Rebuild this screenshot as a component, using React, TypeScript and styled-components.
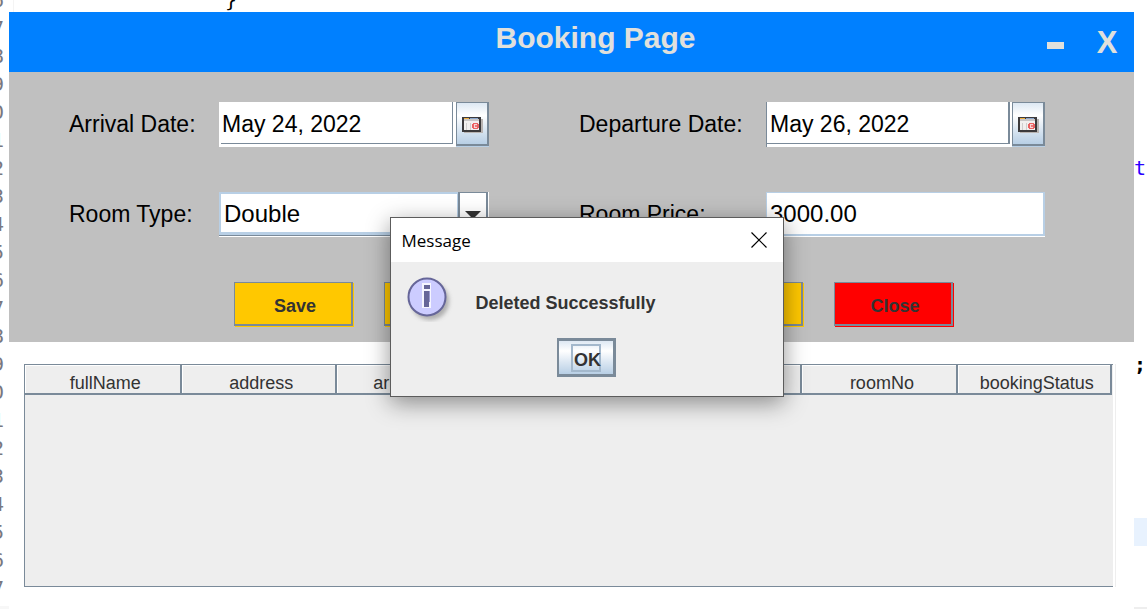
import React from "react";
import styled, { createGlobalStyle, css } from "styled-components";

const steel = "#7a8a99";
const sky = "#b8cfe5";
const sans = '"Liberation Sans", Arial, sans-serif';
const mono = '"DejaVu Sans Mono", monospace';
const metal = "linear-gradient(#dde8f3 0%, #ffffff 30%, #dde8f3 62%, #b8cfe5 100%)";

const GlobalStyle = createGlobalStyle`
  *, *::before, *::after { box-sizing: border-box; }
  body { margin: 0; background: #fff; font-family: ${sans}; }
  button, input, select { font-family: inherit; margin: 0; border-radius: 0; }
`;

const Desktop = styled.div`
  position: relative;
  display: grid;
  grid-template-columns: 9px minmax(0, 1fr) 13px;
  min-height: 100vh;
  overflow: hidden;
`;

const EditorStrip = styled.div<{ $edge: string; $rule: number }>`
  overflow: hidden;
  border-bottom: ${(p) => p.$rule}px solid ${(p) => p.$edge};
  font-family: ${mono};
  font-size: 20px;
`;

const CodeLines = styled.div`
  display: flex;
  flex-direction: column;
  margin-top: -14px;
`;

const LineNumber = styled.span`
  display: flex;
  justify-content: flex-end;
  height: 28px;
  padding-right: 5px;
  line-height: 28px;
  color: #787880;
`;

const CodeLine = styled.span<{ $active?: boolean; $color?: string; $bold?: boolean }>`
  height: 28px;
  line-height: 28px;
  color: ${(p) => p.$color ?? "#000"};
  font-weight: ${(p) => (p.$bold ? 700 : 400)};
  background: ${(p) => (p.$active ? "#e8f2fe" : "transparent")};
`;

const Center = styled.div`
  display: flex;
  flex-direction: column;
  min-width: 0;
`;

const EditorTop = styled.div`
  height: 12px;
  margin-left: 4px;
  padding-left: 211px;
  overflow: hidden;
  border-left: 1px solid #f4f4f4;
  font-family: ${mono};
  font-size: 20px;
`;

const BookingWindow = styled.main`
  flex: 1;
  background: #fff;
`;

const TitleBar = styled.header`
  display: flex;
  height: 60px;
  background: #0080ff;
  color: #e0e0dc;
`;

const Title = styled.h1`
  flex: 1;
  margin: 0;
  padding-left: 148px;
  text-align: center;
  font-size: 30px;
  line-height: 52px;
  font-weight: 700;
`;

const WindowControls = styled.div`
  display: flex;
  align-items: center;
  justify-content: flex-end;
  gap: 22px;
  width: 100px;
  padding-right: 12px;
`;

const WindowButton = styled.button`
  display: grid;
  place-items: center;
  width: 30px;
  height: 60px;
  padding: 2px 0 0;
  border: 0;
  background: transparent;
  color: inherit;
  font-size: 31px;
  font-weight: 700;
`;

const MinimizeMark = styled.span`
  width: 17px;
  height: 7px;
  margin-top: 4px;
  background: #e0e0dc;
`;

const Panel = styled.form`
  padding: 30px 89px 15px 60px;
  background: #c0c0c0;
`;

const Fields = styled.div`
  display: grid;
  grid-template-columns: 150px minmax(0, 270fr) 277px minmax(0, 279fr);
  row-gap: 45px;
`;

const Label = styled.label<{ $second?: boolean }>`
  padding-left: ${(p) => (p.$second ? 90 : 0)}px;
  font-size: 23px;
  line-height: 45px;
  color: #000;
  white-space: nowrap;
`;

const DateField = styled.div`
  display: flex;
  height: 45px;
`;

const DateFrame = styled.div<{ $framed?: boolean }>`
  flex: 1;
  min-width: 0;
  padding: 0 ${(p) => (p.$framed ? 2 : 3)}px 3px ${(p) => (p.$framed ? 0 : 2)}px;
  background: #fff;
  border-left: ${(p) => (p.$framed ? `1px solid ${steel}` : "0")};
`;

const DateInput = styled.input<{ $framed?: boolean }>`
  display: block;
  width: 100%;
  height: 42px;
  padding: 4px 0 0 ${(p) => (p.$framed ? 3 : 1)}px;
  border: solid ${steel};
  border-width: 0 ${(p) => (p.$framed ? 2 : 1)}px 1px 0;
  outline: 0;
  background: #fff;
  color: #000;
  font-size: 23px;
`;

const PickButton = styled.button`
  display: grid;
  place-items: center;
  width: 33px;
  height: 44px;
  padding: 3px 0 0 1px;
  border: solid ${steel};
  border-width: 1px 2px 2px 1px;
  background: ${metal};
  box-shadow: 0 1px 0 ${sky};
`;

const Combo = styled.div`
  display: flex;
  height: 45px;
  border-bottom: 1px solid #fff;
  border-right: 1px solid #fff;
`;

const Select = styled.select`
  flex: 1;
  min-width: 0;
  padding: 0 0 0 3px;
  appearance: none;
  outline: 0;
  border: 2px solid ${sky};
  border-right-width: 1px;
  background: #fff;
  box-shadow: inset 0 -1px 0 ${sky};
  color: #000;
  font-size: 24px;
`;

const ComboArrow = styled.span`
  display: grid;
  place-items: center;
  width: 30px;
  padding-top: 2px;
  border: solid ${steel};
  border-width: 1px 2px 1px 2px;
  background: linear-gradient(#fff, #fff 60%, #e4edf5);
`;

const ComboRow = styled.div`
  display: flex;
  flex: 1;
  border-bottom: 1px solid ${steel};
`;

const PriceInput = styled.input`
  width: 100%;
  min-width: 0;
  height: 44px;
  padding: 0 0 0 3px;
  border: solid ${sky};
  border-width: 1px 2px 2px 1px;
  outline: 0;
  background: #fff;
  box-shadow: 0 1px 0 #fff;
  color: #000;
  font-size: 24px;
`;

const Actions = styled.div`
  display: flex;
  gap: 30px;
  margin-top: 45px;
  padding-left: 165px;
`;

const ActionButton = styled.button<{ $danger?: boolean }>`
  ${(p) => {
    const fill = p.$danger ? "#ff0000" : "#ffc800";
    return css`
      background: ${fill};
      box-shadow: 1px 1px 0 ${fill};
    `;
  }}
  width: 119px;
  height: 44px;
  margin: 0 1px 1px 0;
  padding: 6px 0 0 4px;
  border: solid ${steel};
  border-width: 1px 2px 2px 1px;
  color: #333;
  font-size: 18px;
  font-weight: 700;
`;

const TableFrame = styled.div`
  min-height: 223px;
  margin: 22px 21px 22px 15px;
  background: #eee;
  border: 1px solid ${steel};
  border-right: 0;
  box-shadow: 2px 0 0 #fff, 3px 0 0 #eee;
`;

const Table = styled.table`
  width: calc(100% - 1px);
  table-layout: fixed;
  border-collapse: separate;
  border-spacing: 0;
`;

const Column = styled.col<{ $share: number }>`
  width: ${(p) => p.$share}%;
`;

const HeadCell = styled.th`
  height: 30px;
  padding: 7px 0 0 6px;
  border: solid ${steel};
  border-width: 0 2px 2px 0;
  box-shadow: inset 1px 1px 0 #fff;
  color: #333;
  font-size: 18px;
  line-height: 20px;
  font-weight: 400;
  text-align: center;
`;

const Dialog = styled.section`
  position: absolute;
  top: 217px;
  left: calc(50% + 13px);
  width: 394px;
  transform: translateX(-50%);
  border: 1px solid #5c5c5c;
  background: #eee;
  box-shadow: 0 6px 22px rgba(0, 0, 0, 0.42);
`;

const DialogTitle = styled.header`
  display: flex;
  align-items: center;
  justify-content: space-between;
  height: 44px;
  padding: 0 16px 0 11px;
  background: #fff;
`;

const DialogHeading = styled.h2`
  margin: 0;
  padding-top: 1px;
  font-family: "Open Sans", sans-serif;
  font-size: 17px;
  line-height: 44px;
  font-weight: 400;
  color: #000;
`;

const DialogClose = styled.button`
  display: flex;
  padding: 0;
  border: 0;
  background: transparent;
`;

const DialogBody = styled.div`
  display: flex;
  align-items: flex-start;
  gap: 22px;
  padding: 12px 15px 0;
`;

const MessageText = styled.p`
  margin: 0;
  font-size: 18px;
  line-height: 58px;
  font-weight: 700;
  color: #333;
`;

const DialogFooter = styled.footer`
  display: flex;
  justify-content: center;
  padding: 6px 0 19px;
`;

const OkButton = styled.button`
  display: grid;
  place-items: center;
  width: 59px;
  height: 39px;
  padding: 0;
  border: 3px solid ${steel};
  border-left-width: 2px;
  background: ${metal};
`;

const FocusRing = styled.span`
  width: 30px;
  height: 28px;
  padding-left: 1px;
  border: 2px solid #a3b8cc;
  color: #333;
  font-size: 18px;
  line-height: 29px;
  font-weight: 700;
`;

const CalendarIcon = () => (
  <svg width="21" height="16" viewBox="0 0 21 16" shapeRendering="crispEdges" aria-hidden="true">
    <path d="M2 2h19v14H2z" fill="#b9b4b2" />
    <path d="M0 0h19v15H0z" fill="#3c3a3c" />
    <path d="M2 2h15v11H2z" fill="#f2f0ef" />
    <path d="M2 1h5v1H2z" fill="#f0b040" />
    <path d="M8 1h8v1H8z" fill="#8ba6cc" />
    <path d="M2 2h15v2H2z" fill="#c8c6c6" />
    <path d="M4 6h1v7H4zM8 6h1v7H8z" fill="#d0cece" />
    <path d="M11 6h5v1h-5zM10 7h2v4h-2zM15 7h2v4h-2zM11 11h5v1h-5z" fill="#ea6262" />
    <path d="M12 7h3v4h-3z" fill="#f8d4d4" />
    <path d="M13 8h2v2h-2z" fill="#ea7a7a" />
  </svg>
);

const InfoIcon = () => (
  <svg width="48" height="48" viewBox="0 0 48 48" aria-hidden="true">
    <defs>
      <filter id="soft" x="-20%" y="-20%" width="140%" height="140%">
        <feGaussianBlur stdDeviation="2" />
      </filter>
    </defs>
    <circle cx="24" cy="27" r="19" fill="#999" opacity="0.75" filter="url(#soft)" />
    <circle cx="21" cy="23" r="18.5" fill="#ccccff" stroke="#666699" strokeWidth="2" />
    <path d="M16 9h9v25h-9z" fill="#f5f5ff" />
    <path d="M18 11h6v4h-6zM18 17h5v16h-5z" fill="#666699" />
    <path d="M23 17h1v11h-1z" fill="#9999cc" />
  </svg>
);

const lineNumbers = Array.from({ length: 22 }, (_, i) => (i + 6) % 10);
const columns = [
  { name: "fullName", share: 14.4 },
  { name: "address", share: 14.3 },
  { name: "arrivalDate", share: 14.3 },
  { name: "departureDate", share: 14.3 },
  { name: "roomType", share: 14.2 },
  { name: "roomNo", share: 14.3 },
  { name: "bookingStatus", share: 14.2 },
];

export default function App() {
  return (
    <>
      <GlobalStyle />
      <Desktop>
        <EditorStrip $edge="#f7f7f7" $rule={3}>
          <CodeLines>
            {lineNumbers.map((n, i) => (
              <LineNumber key={i}>{n}</LineNumber>
            ))}
          </CodeLines>
        </EditorStrip>

        <Center>
          <EditorTop>
            <CodeLines>
              <CodeLine>{"}"}</CodeLine>
            </CodeLines>
          </EditorTop>
          <BookingWindow>
            <TitleBar>
              <Title>Booking Page</Title>
              <WindowControls>
                <WindowButton type="button" aria-label="Minimize">
                  <MinimizeMark />
                </WindowButton>
                <WindowButton type="button">X</WindowButton>
              </WindowControls>
            </TitleBar>

            <Panel>
              <Fields>
                <Label htmlFor="arrival">Arrival Date:</Label>
                <DateField>
                  <DateFrame>
                    <DateInput id="arrival" defaultValue="May 24, 2022" />
                  </DateFrame>
                  <PickButton type="button" aria-label="Pick arrival date">
                    <CalendarIcon />
                  </PickButton>
                </DateField>
                <Label htmlFor="departure" $second>Departure Date:</Label>
                <DateField>
                  <DateFrame $framed>
                    <DateInput id="departure" $framed defaultValue="May 26, 2022" />
                  </DateFrame>
                  <PickButton type="button" aria-label="Pick departure date">
                    <CalendarIcon />
                  </PickButton>
                </DateField>
                <Label htmlFor="roomType">Room Type:</Label>
                <Combo>
                  <ComboRow>
                    <Select id="roomType" defaultValue="Double">
                      <option>Double</option>
                    </Select>
                    <ComboArrow>
                      <svg width="16" height="8" viewBox="0 0 16 8" aria-hidden="true">
                        <path d="M0 0h16L8 8z" fill="#333" />
                      </svg>
                    </ComboArrow>
                  </ComboRow>
                </Combo>
                <Label htmlFor="price" $second>Room Price:</Label>
                <PriceInput id="price" defaultValue="3000.00" />
              </Fields>
              <Actions>
                <ActionButton type="button">Save</ActionButton>
                <ActionButton type="button" aria-label="Update" />
                <ActionButton type="button" aria-label="Delete" />
                <ActionButton type="button" aria-label="Clear" />
                <ActionButton type="button" $danger>Close</ActionButton>
              </Actions>
            </Panel>

            <TableFrame>
              <Table>
                <colgroup>
                  {columns.map((c) => (
                    <Column key={c.name} $share={c.share} />
                  ))}
                </colgroup>
                <thead>
                  <tr>
                    {columns.map((c) => (
                      <HeadCell key={c.name} scope="col">{c.name}</HeadCell>
                    ))}
                  </tr>
                </thead>
              </Table>
            </TableFrame>
          </BookingWindow>
        </Center>

        <EditorStrip $edge="#eeeeee" $rule={2}>
          <CodeLines>
            {lineNumbers.map((_, i) => (
              <CodeLine key={i} $active={i === 19} $bold={i === 13} $color={i === 6 ? "#2a00ff" : undefined}>
                {i === 6 ? "t" : i === 13 ? ";" : ""}
              </CodeLine>
            ))}
          </CodeLines>
        </EditorStrip>

        <Dialog role="dialog" aria-labelledby="dialog-title">
          <DialogTitle>
            <DialogHeading id="dialog-title">Message</DialogHeading>
            <DialogClose type="button" aria-label="Close message">
              <svg width="16" height="16" viewBox="0 0 16 16" aria-hidden="true">
                <path d="M0.5 0.5l15 15M15.5 0.5l-15 15" stroke="#000" strokeWidth="1.2" fill="none" />
              </svg>
            </DialogClose>
          </DialogTitle>
          <DialogBody>
            <InfoIcon />
            <MessageText>Deleted Successfully</MessageText>
          </DialogBody>
          <DialogFooter>
            <OkButton type="button">
              <FocusRing>OK</FocusRing>
            </OkButton>
          </DialogFooter>
        </Dialog>
      </Desktop>
    </>
  );
}
